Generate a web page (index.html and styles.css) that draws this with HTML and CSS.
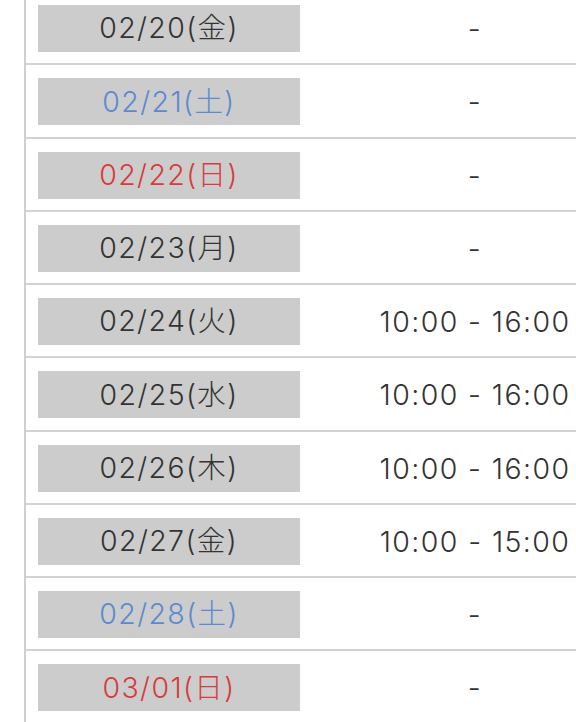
FILE: index.html
```html
<!DOCTYPE html>
<html lang="ja">
<head>
<meta charset="utf-8">
<link rel="stylesheet" href="styles.css">
</head>
<body>
<div class="schedule">
  <div class="row"><div class="date-cell"><span class="date">02/20(金)</span></div><div class="time">-</div></div>
  <div class="row"><div class="date-cell"><span class="date sat">02/21(土)</span></div><div class="time">-</div></div>
  <div class="row"><div class="date-cell"><span class="date sun">02/22(日)</span></div><div class="time">-</div></div>
  <div class="row"><div class="date-cell"><span class="date">02/23(月)</span></div><div class="time">-</div></div>
  <div class="row"><div class="date-cell"><span class="date">02/24(火)</span></div><div class="time">10:00 - 16:00</div></div>
  <div class="row"><div class="date-cell"><span class="date">02/25(水)</span></div><div class="time">10:00 - 16:00</div></div>
  <div class="row"><div class="date-cell"><span class="date">02/26(木)</span></div><div class="time">10:00 - 16:00</div></div>
  <div class="row"><div class="date-cell"><span class="date">02/27(金)</span></div><div class="time">10:00 - 15:00</div></div>
  <div class="row"><div class="date-cell"><span class="date sat">02/28(土)</span></div><div class="time">-</div></div>
  <div class="row"><div class="date-cell"><span class="date sun">03/01(日)</span></div><div class="time">-</div></div>
</div>
</body>
</html>
```
FILE: styles.css
```css
html, body {
  margin: 0;
  padding: 0;
  overflow: hidden;
  background: #ffffff;
}
body {
  font-family: Inter, "Noto Sans CJK JP", sans-serif;
  font-weight: 300;
  color: #333333;
  letter-spacing: 1.4px;
}
.schedule {
  margin-top: -8px;
  margin-left: 24px;
  border-left: 2px solid #cfcfcf;
}
.row {
  display: grid;
  grid-template-columns: 274px 1fr;
  align-items: center;
  padding: 13px 0 11.25px;
  border-bottom: 2px solid #d2d2d2;
}
.date-cell {
  padding-left: 12px;
}
.date {
  display: flex;
  align-items: center;
  justify-content: center;
  width: 262px;
  height: 47px;
  background: #cccccc;
  font-size: 28.5px;
  line-height: 1;
}
.date.sat { color: #5b8ad2; }
.date.sun { color: #d83b3b; }
.time {
  padding-left: 74px;
  text-align: center;
  white-space: nowrap;
  font-size: 28.5px;
  line-height: 47px;
}
```
